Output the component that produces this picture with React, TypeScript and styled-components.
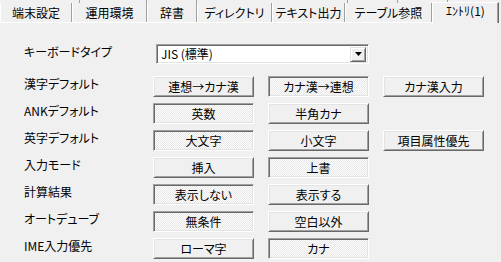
import React from "react";
import styled, { createGlobalStyle, css } from "styled-components";

const Global = createGlobalStyle`
  html, body { margin: 0; padding: 0; background: #f0f0f0; }
  body {
    font-family: "Noto Sans CJK JP", "Noto Sans", sans-serif;
    font-size: 12px;
    font-feature-settings: "palt";
    color: #000;
    width: 501px;
    height: 262px;
    overflow: hidden;
  }
`;

const Window = styled.div`
  width: 501px;
  height: 262px;
  display: flex;
  flex-direction: column;
  background: #f0f0f0;
`;

const TabArea = styled.div`
  display: flex;
  flex-direction: column;
  height: 23px;
  border-bottom: 1px solid #ffffff;
  box-sizing: border-box;
`;

const BackRow = styled.div`
  display: flex;
  height: 3px;
`;

const BackSeg = styled.div<{ $w: number }>`
  width: ${(p) => p.$w}px;
  flex: none;
  box-sizing: border-box;
  border-right: 1px solid #a0a0a0;
`;

const FrontRow = styled.div`
  display: flex;
  align-items: flex-end;
  height: 19px;
`;

const Tab = styled.div<{ $w: number; $active?: boolean }>`
  width: ${(p) => p.$w}px;
  flex: none;
  box-sizing: border-box;
  height: 19px;
  display: flex;
  align-items: center;
  justify-content: center;
  border-left: 1px solid #ffffff;
  border-right: 1px solid #a0a0a0;
  box-shadow: 1px 0 0 #e3e3e3;
  white-space: nowrap;
  line-height: 14px;
  padding-top: 1px;
  ${(p) =>
    p.$active &&
    css`
      height: 21px;
      margin-top: -2px;
      margin-bottom: -1px;
      background: #f0f0f0;
      border-top: 1px solid #ffffff;
      border-right: 1px solid #696969;
      box-shadow: inset -1px 0 0 #a0a0a0;
      padding-top: 0;
      padding-bottom: 4px;
      position: relative;
    `}
`;

const Form = styled.div`
  display: grid;
  grid-template-columns: 115px 101px 101px 101px;
  grid-template-rows: 20px 0px repeat(7, 21px);
  column-gap: 14px;
  row-gap: 6px;
  padding: 21px 0 0 24px;
`;

const Label = styled.div<{ $row: number }>`
  grid-column: 1;
  grid-row: ${(p) => p.$row};
  line-height: 14px;
  white-space: nowrap;
  align-self: start;
  padding-top: 1px;
`;

const Combo = styled.div`
  grid-column: 2 / span 2;
  grid-row: 1;
  margin-left: 3px;
  width: 213px;
  height: 20px;
  box-sizing: border-box;
  background: #ffffff;
  border-top: 1px solid #a0a0a0;
  border-left: 1px solid #a0a0a0;
  border-right: 1px solid #ffffff;
  border-bottom: 1px solid #ffffff;
  box-shadow: inset 1px 1px 0 #696969, inset -1px -1px 0 #e3e3e3;
  display: flex;
  align-items: center;
  padding: 2px 2px 2px 4px;
`;

const ComboText = styled.span`
  flex: 1;
  line-height: 14px;
`;

const ComboButton = styled.div`
  width: 16px;
  height: 15px;
  box-sizing: border-box;
  background: #f0f0f0;
  border-top: 1px solid #e3e3e3;
  border-left: 1px solid #e3e3e3;
  border-right: 1px solid #696969;
  border-bottom: 1px solid #696969;
  box-shadow: inset 1px 1px 0 #ffffff, inset -1px -1px 0 #a0a0a0;
  display: flex;
  align-items: center;
  justify-content: center;
`;

const Button = styled.div<{ $pressed?: boolean; $col: number; $row: number }>`
  grid-column: ${(p) => p.$col};
  grid-row: ${(p) => p.$row};
  box-sizing: border-box;
  height: 21px;
  display: flex;
  align-items: center;
  justify-content: center;
  line-height: 14px;
  white-space: nowrap;
  background: #f0f0f0;
  border-top: 1px solid #ffffff;
  border-left: 1px solid #ffffff;
  border-right: 1px solid #696969;
  border-bottom: 1px solid #696969;
  box-shadow: inset 1px 1px 0 #e3e3e3, inset -1px -1px 0 #a0a0a0;
  ${(p) =>
    p.$pressed &&
    css`
      border-top: 1px solid #a0a0a0;
      border-left: 1px solid #a0a0a0;
      border-right: 1px solid #ffffff;
      border-bottom: 1px solid #ffffff;
      box-shadow: inset 1px 1px 0 #696969, inset -1px -1px 0 #e3e3e3;
      background-color: #ffffff;
      background-image: repeating-conic-gradient(#e6e6e6 0 25%, #ffffff 0 50%);
      background-size: 2px 2px;
      padding-top: 1px;
    `}
`;

const tabs: { label: string; w: number; active?: boolean }[] = [
  { label: "端末設定", w: 72 },
  { label: "運用環境", w: 75 },
  { label: "辞書", w: 50 },
  { label: "ディレクトリ", w: 75 },
  { label: "テキスト出力", w: 73 },
  { label: "テーブル参照", w: 87 },
  { label: "ｴﾝﾄﾘ(1)", w: 67, active: true },
];

const backSegs = [80, 67, 50, 151, 50, 50];

type Row = { label: string; buttons: { text: string; pressed?: boolean }[] };

const rows: Row[] = [
  { label: "漢字デフォルト", buttons: [{ text: "連想→カナ漢" }, { text: "カナ漢→連想", pressed: true }, { text: "カナ漢入力" }] },
  { label: "ANKデフォルト", buttons: [{ text: "英数", pressed: true }, { text: "半角カナ" }] },
  { label: "英字デフォルト", buttons: [{ text: "大文字", pressed: true }, { text: "小文字" }, { text: "項目属性優先" }] },
  { label: "入力モード", buttons: [{ text: "挿入" }, { text: "上書", pressed: true }] },
  { label: "計算結果", buttons: [{ text: "表示しない", pressed: true }, { text: "表示する" }] },
  { label: "オートデューブ", buttons: [{ text: "無条件", pressed: true }, { text: "空白以外" }] },
  { label: "IME入力優先", buttons: [{ text: "ローマ字" }, { text: "カナ", pressed: true }] },
];

export default function App() {
  return (
    <Window>
      <Global />
      <TabArea>
        <BackRow>
          {backSegs.map((w, i) => (
            <BackSeg key={i} $w={w} />
          ))}
        </BackRow>
        <FrontRow>
          {tabs.map((t) => (
            <Tab key={t.label} $w={t.w} $active={t.active}>
              {t.label}
            </Tab>
          ))}
        </FrontRow>
      </TabArea>
      <Form>
        <Label $row={1}>キーボードタイプ</Label>
        <Combo>
          <ComboText>JIS (標準)</ComboText>
          <ComboButton>
            <svg width="7" height="4" viewBox="0 0 7 4">
              <path d="M0 0h7L3.5 4z" fill="#000" />
            </svg>
          </ComboButton>
        </Combo>
        {rows.map((r, ri) => (
          <React.Fragment key={r.label}>
            <Label $row={ri + 3}>{r.label}</Label>
            {r.buttons.map((b, i) => (
              <Button key={b.text} $col={i + 2} $row={ri + 3} $pressed={b.pressed}>
                {b.text}
              </Button>
            ))}
          </React.Fragment>
        ))}
      </Form>
    </Window>
  );
}
